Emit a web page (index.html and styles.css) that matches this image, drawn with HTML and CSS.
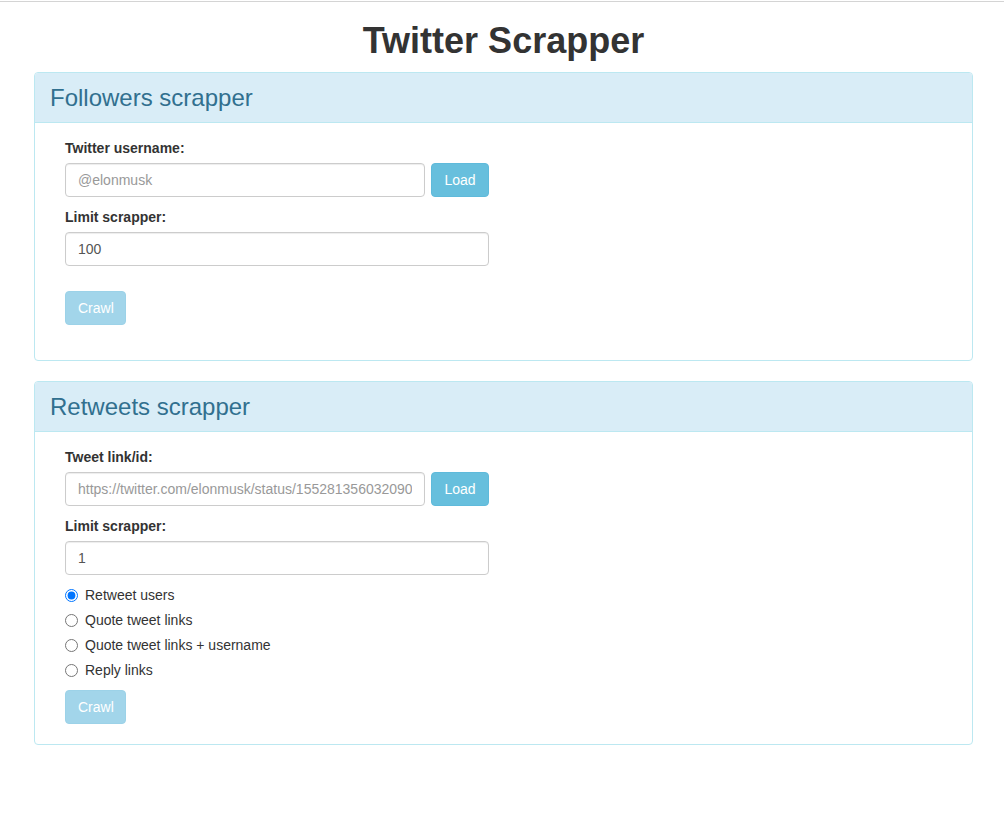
FILE: index.html
```html
<!DOCTYPE html>
<html lang="en">
<head>
<meta charset="utf-8">
<title>Twitter Scrapper</title>
<link rel="stylesheet" href="styles.css">
</head>
<body>
<div class="topline"></div>
<div class="page">
  <h1 class="title">Twitter Scrapper</h1>

  <section class="panel panel-first">
    <div class="panel-heading"><h3 class="panel-title">Followers scrapper</h3></div>
    <div class="panel-body">
      <div class="form">
        <label class="label">Twitter username:</label>
        <div class="input-group">
          <input class="input" type="text" placeholder="@elonmusk">
          <button class="btn btn-load">Load</button>
        </div>
        <label class="label">Limit scrapper:</label>
        <input class="input" type="text" value="100">
        <button class="btn btn-crawl btn-crawl-first" disabled>Crawl</button>
      </div>
    </div>
  </section>

  <section class="panel panel-second">
    <div class="panel-heading"><h3 class="panel-title">Retweets scrapper</h3></div>
    <div class="panel-body">
      <div class="form">
        <label class="label">Tweet link/id:</label>
        <div class="input-group">
          <input class="input" type="text" placeholder="https://twitter.com/elonmusk/status/1552813560320901120">
          <button class="btn btn-load">Load</button>
        </div>
        <label class="label">Limit scrapper:</label>
        <input class="input" type="text" value="1">
        <div class="radios">
          <label class="radio"><input type="radio" name="mode" checked><span>Retweet users</span></label>
          <label class="radio"><input type="radio" name="mode"><span>Quote tweet links</span></label>
          <label class="radio"><input type="radio" name="mode"><span>Quote tweet links + username</span></label>
          <label class="radio"><input type="radio" name="mode"><span>Reply links</span></label>
        </div>
        <button class="btn btn-crawl btn-crawl-second" disabled>Crawl</button>
      </div>
    </div>
  </section>
</div>
</body>
</html>
```

FILE: styles.css
```css
* { box-sizing: border-box; }

html, body {
  margin: 0;
  padding: 0;
  background: #fff;
}

body {
  font-family: "Liberation Sans", Arial, Helvetica, sans-serif;
  font-size: 14px;
  line-height: 20px;
  color: #333;
}

.topline {
  height: 1px;
  margin-top: 1px;
  background: #d4d4d4;
}

.page {
  width: 939px;
  margin-left: 34px;
}

.title {
  margin: 19px 0 11px;
  font-size: 36px;
  line-height: 40px;
  font-weight: bold;
  text-align: center;
  color: #333;
}

.panel {
  border: 1px solid #bce8f1;
  border-radius: 4px;
  background: #fff;
}

.panel-second {
  margin-top: 20px;
}

.panel-heading {
  background: #d9edf7;
  color: #31708f;
  padding: 12px 15px 11px;
  border-bottom: 1px solid #bce8f1;
  border-radius: 3px 3px 0 0;
}

.panel-title {
  margin: 0;
  font-size: 24px;
  line-height: 26px;
  font-weight: normal;
}

.panel-body {
  padding: 15px 30px 0;
}

.panel-first .panel-body { padding-bottom: 35px; }
.panel-second .panel-body { padding-bottom: 20px; }

.form {
  width: 424px;
  display: flex;
  flex-direction: column;
  align-items: flex-start;
}

.label {
  display: block;
  font-weight: bold;
  margin-bottom: 5px;
}

.input-group {
  display: flex;
  gap: 6px;
  width: 100%;
  margin-bottom: 10px;
}

.input {
  display: block;
  width: 100%;
  height: 34px;
  padding: 6px 12px;
  font-family: inherit;
  font-size: 14px;
  line-height: 20px;
  color: #555;
  background: #fff;
  border: 1px solid #ccc;
  border-radius: 4px;
  box-shadow: inset 0 1px 1px rgba(0,0,0,.075);
  outline: none;
  margin: 0;
}

.input-group .input {
  width: 360px;
  flex: none;
}

.input::placeholder { color: #999; }

.btn {
  height: 34px;
  padding: 6px 12px;
  font-family: inherit;
  font-size: 14px;
  line-height: 20px;
  color: #fff;
  border: 1px solid transparent;
  border-radius: 4px;
  cursor: pointer;
  flex: none;
}

.btn-load {
  width: 58px;
  background: #67bfdd;
  border-color: #5fbadb;
}

.btn-crawl {
  width: 61px;
  background: #a2d5ea;
  border-color: #9cd2e8;
  cursor: not-allowed;
}

.btn-crawl-first { margin-top: 25px; }
.btn-crawl-second { margin-top: 10px; }

.radios {
  display: flex;
  flex-direction: column;
  gap: 5px;
  margin-top: 10px;
}

.radio {
  display: flex;
  align-items: center;
  height: 20px;
  color: #333;
}

.radio input {
  margin: 0 7px 0 0;
  width: 13px;
  height: 13px;
}
```
